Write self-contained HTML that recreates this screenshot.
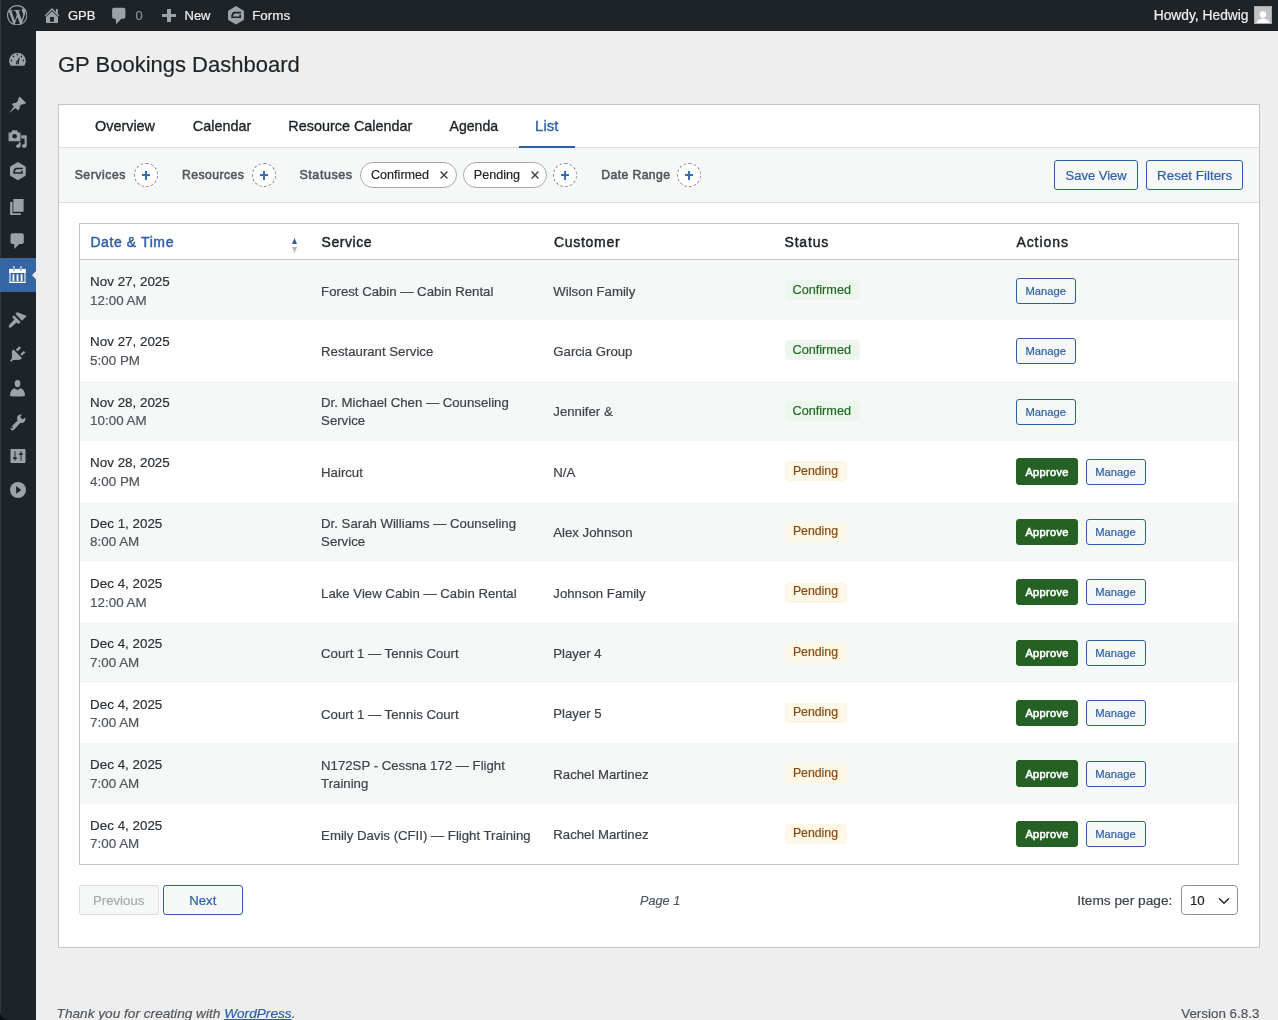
<!DOCTYPE html>
<html><head><meta charset="utf-8"><title>GP Bookings Dashboard</title>
<style>
html,body{margin:0;padding:0;}
body{width:1278px;height:1020px;overflow:hidden;position:relative;background:#eeeeee;font-family:"Liberation Sans", sans-serif;}
.t{position:absolute;white-space:nowrap;}
.b{position:absolute;}
#root{position:absolute;left:0;top:0;width:1278px;height:1020px;will-change:transform;}
.t{-webkit-text-stroke:0.2px currentColor;}
a{color:inherit}
</style></head><body><div id="root">
<div class="b" style="left:0px;top:0px;width:1278px;height:31px;background:#1d2327"></div>
<div class="b" style="left:0px;top:31px;width:36px;height:989px;background:#1d2327"></div>
<div class="b" style="left:0px;top:0px;width:1px;height:1020px;background:#33383d"></div>
<svg class="b" style="left:6.8px;top:4.65px" width="20.4" height="20.4" viewBox="0 0 20 20"><path fill="#9ca2a7" d="M20 10c0-5.51-4.49-10-10-10C4.48 0 0 4.49 0 10c0 5.52 4.48 10 10 10 5.51 0 10-4.48 10-10zM7.78 15.37L4.37 6.22c.55-.02 1.17-.08 1.17-.08.5-.06.44-1.13-.06-1.11 0 0-1.45.11-2.37.11-.18 0-.37 0-.58-.01C4.12 2.69 6.87 1.11 10 1.11c2.33 0 4.45.87 6.05 2.34-.68-.11-1.65.39-1.65 1.58 0 .74.45 1.36.9 2.1.35.61.55 1.36.55 2.46 0 1.49-1.4 5-1.4 5l-3.03-8.37c.54-.02.82-.17.82-.17.5-.05.44-1.25-.06-1.22 0 0-1.44.12-2.38.12-.87 0-2.33-.12-2.33-.12-.5-.03-.56 1.2-.06 1.22l.92.08 1.26 3.41zM17.41 10c.24-.64.74-1.87.43-4.25.7 1.29 1.05 2.71 1.05 4.25 0 3.29-1.73 6.24-4.4 7.78.97-2.59 1.94-5.2 2.92-7.78zM6.1 18.09C3.12 16.65 1.11 13.53 1.11 10c0-1.3.23-2.48.72-3.59C3.25 10.3 4.67 14.2 6.1 18.09zm4.03-6.63l2.58 6.98c-.86.29-1.76.45-2.71.45-.79 0-1.57-.11-2.29-.33.81-2.38 1.62-4.74 2.42-7.1z"/></svg>
<svg class="b" style="left:44px;top:7px" width="16" height="17" viewBox="0 0 16 17"><path d="M0.6 8.4 L8 1.1 L11.9 4.9 V2.1 H13.9 V6.9 L15.4 8.4 L14.4 9.4 L8 3.1 L1.6 9.4 Z" fill="#9ca2a7"/><path d="M2 10 L8 4.3 L14 10 V16 H2 Z M6.1 10.1 V14.8 H9.9 V10.1 Z" fill="#9ca2a7" fill-rule="evenodd"/></svg>
<div class="t" style="left:68.00px;top:6.00px;font-size:13px;line-height:20px;color:#f0f0f1;font-weight:400;font-style:normal;">GPB</div>
<svg class="b" style="left:112px;top:7px" width="14" height="18" viewBox="0 0 14 18"><path d="M2.1 0.85 H11.4 Q13.4 0.85 13.4 2.85 V9.8 Q13.4 11.8 11.4 11.8 H9.3 L4.2 17.2 L3.7 11.8 H2.1 Q0.1 11.8 0.1 9.8 V2.85 Q0.1 0.85 2.1 0.85 Z" fill="#9ca2a7"/></svg>
<div class="t" style="left:135.50px;top:6.00px;font-size:13px;line-height:20px;color:#8c8f94;font-weight:400;font-style:normal;">0</div>
<div class="b" style="left:162px;top:14px;width:14px;height:3px;background:#9ca2a7"></div>
<div class="b" style="left:167.2px;top:8.9px;width:3.5px;height:13.2px;background:#9ca2a7"></div>
<div class="t" style="left:184.50px;top:6.00px;font-size:13px;line-height:20px;color:#f0f0f1;font-weight:400;font-style:normal;">New</div>
<svg class="b" style="left:227.9px;top:6.3px" width="16" height="18.6" viewBox="0 0 16 18.6"><path d="M8 0 L15.3 4.4 Q16 4.8 16 5.6 V13 Q16 13.8 15.3 14.2 L8 18.6 L0.7 14.2 Q0 13.8 0 13 V5.6 Q0 4.8 0.7 4.4 Z" fill="#9ca2a7"/><path d="M13 5.75 H6.2 Q4.7 5.75 4.1 7.3 L3.3 9.4 V12 H13 V8.8 H11.4 V10.5 H4.9 L5.3 9.2 Q5.7 7.4 6.8 7.4 H13 Z" fill="#1d2327"/></svg>
<div class="t" style="left:252.20px;top:6.00px;font-size:13.4px;line-height:20px;color:#f0f0f1;font-weight:400;font-style:normal;">Forms</div>
<div class="t" style="left:1153.70px;top:6.00px;font-size:13.8px;line-height:20px;color:#f0f0f1;font-weight:400;font-style:normal;">Howdy, Hedwig</div>
<svg class="b" style="left:1254px;top:6px" width="18" height="18" viewBox="0 0 18 18"><rect x="0.5" y="0.5" width="17" height="17" fill="#c2c3c5" stroke="#a9abae" stroke-width="1"/><circle cx="9" cy="8.6" r="3.3" fill="#fff"/><path d="M2.6 16.9 Q3.6 12.8 9 12.5 Q14.4 12.8 15.4 16.9 Z" fill="#fff"/></svg>
<svg class="b" style="left:0px;top:1012px" width="8" height="8" viewBox="0 0 8 8"><path d="M0 0 Q0.5 7.5 8 8 L0 8 Z" fill="#0a0b0c"/></svg>
<svg class="b" style="left:8px;top:49.40px" width="20" height="20" viewBox="0 0 20 20"><path d="M2.7 16.7 A8.3 8.3 0 1 1 16.3 16.7 Z" fill="#9ca2a7"/><ellipse cx="3.5" cy="11.5" rx=".75" ry=".95" fill="#1d2327"/><ellipse cx="5.5" cy="7.5" rx=".75" ry=".95" fill="#1d2327"/><ellipse cx="9.4" cy="5.5" rx=".75" ry=".95" fill="#1d2327"/><ellipse cx="13.4" cy="7.5" rx=".75" ry=".95" fill="#1d2327"/><ellipse cx="15.4" cy="11.5" rx=".75" ry=".95" fill="#1d2327"/><path d="M8 13.4 L11.8 7.6 L10.9 13.6 Z" fill="#1d2327"/><circle cx="9.4" cy="13.8" r="1.7" fill="#1d2327"/><ellipse cx="9.4" cy="13.8" rx=".6" ry=".8" fill="#9ca2a7"/></svg>
<svg class="b" style="left:8px;top:94.70px" width="20" height="20" viewBox="0 0 20 20"><path d="M11.5 1.4 L18 7.7 L16.8 8.9 L13.4 9.6 L11.6 11.6 L11.8 13.6 L10 15.5 L7.6 13.1 L1.1 18.1 L6 11.6 L3.9 9.6 L5.6 8 L7.8 8.1 L9.8 6 L10.4 3.4 Z" fill="#9ca2a7"/></svg>
<svg class="b" style="left:8px;top:128.70px" width="20" height="20" viewBox="0 0 20 20"><path d="M0.6 3.4 H3.5 L4.2 1.2 H9.1 L9.8 3.4 H12.5 V12.2 H0.6 Z" fill="#9ca2a7"/><circle cx="6.6" cy="7.2" r="2.3" fill="#1d2327"/><path d="M13.3 6.3 H18.7 V17 Q18.7 18.8 16.4 18.8 Q13.9 18.8 13.9 16.9 Q13.9 15 16.6 15 V9.6 H13.3 Z" fill="#9ca2a7"/><path d="M10.8 13.3 H12.6 V17 Q12.6 18.8 10.4 18.8 Q8 18.8 8 16.9 Q8 15.2 10.8 14.9 Z" fill="#9ca2a7"/></svg>
<svg class="b" style="left:10px;top:162.4px" width="15.8" height="18.3" viewBox="0 0 16 18.6"><path d="M8 0 L15.3 4.4 Q16 4.8 16 5.6 V13 Q16 13.8 15.3 14.2 L8 18.6 L0.7 14.2 Q0 13.8 0 13 V5.6 Q0 4.8 0.7 4.4 Z" fill="#9ca2a7"/><path d="M13 5.75 H6.2 Q4.7 5.75 4.1 7.3 L3.3 9.4 V12 H13 V8.8 H11.4 V10.5 H4.9 L5.3 9.2 Q5.7 7.4 6.8 7.4 H13 Z" fill="#1d2327"/></svg>
<svg class="b" style="left:8px;top:197.00px" width="20" height="20" viewBox="0 0 20 20"><rect x="5.3" y="2" width="10.3" height="12.8" fill="#9ca2a7"/><path d="M2.1 4.9 H4.5 V16.2 H12.8 V18 H2.1 Z" fill="#9ca2a7"/></svg>
<svg class="b" style="left:8px;top:230.80px" width="20" height="20" viewBox="0 0 20 20"><path d="M4.5 2.2 H13.8 Q15.8 2.2 15.8 4.2 V11 Q15.8 13 13.8 13 H11.2 L6.35 18.1 L6.2 13 H4.5 Q2.5 13 2.5 11 V4.2 Q2.5 2.2 4.5 2.2 Z" fill="#9ca2a7"/></svg>
<div class="b" style="left:0px;top:258px;width:36px;height:34px;background:#3465a5"></div>
<svg class="b" style="left:8px;top:265px" width="20" height="20" viewBox="0 0 20 20"><rect x="1.1" y="3.9" width="16.7" height="4.1" fill="#fff"/><rect x="1.1" y="16.6" width="16.7" height="1.4" fill="#fff"/><rect x="1.1" y="8" width="1.8" height="8.6" fill="#fff" opacity=".6"/><rect x="16.1" y="8" width="1.7" height="8.6" fill="#fff" opacity=".6"/><rect x="4.5" y="9.2" width="1.8" height="6.7" rx=".5" fill="#fff"/><rect x="8.6" y="9.2" width="1.8" height="6.7" rx=".5" fill="#fff"/><rect x="12.7" y="9.2" width="1.8" height="6.7" rx=".5" fill="#fff"/><circle cx="5.9" cy="2.3" r="1.1" fill="#fff" opacity=".85"/><circle cx="13" cy="2.3" r="1.1" fill="#fff" opacity=".85"/><rect x="5.1" y="2.4" width="1.6" height="3.3" fill="#3465a5"/><rect x="12.2" y="2.4" width="1.6" height="3.3" fill="#3465a5"/><rect x="5.1" y="2.4" width="1.6" height="3.3" fill="#fff" opacity=".55"/><rect x="12.2" y="2.4" width="1.6" height="3.3" fill="#fff" opacity=".55"/></svg>
<svg class="b" style="left:32px;top:270.8px" width="4" height="8.4" viewBox="0 0 4 8.4"><path d="M4 0 L0 4.2 L4 8.4 Z" fill="#eeeeee"/></svg>
<svg class="b" style="left:8px;top:309.80px" width="20" height="20" viewBox="0 0 20 20"><path d="M7.4 3.85 Q8.4 2.2 9.6 2.2 L18.7 6 L14 10.7 Z" fill="#9ca2a7"/><path d="M5.8 5.3 L12.6 12.1 L10.7 14 L8.6 12.4 L3.2 17.3 Q2 18.3 1 17.2 Q0 16 1.2 14.9 L6.3 9.6 L4.1 7.1 Z" fill="#9ca2a7"/></svg>
<svg class="b" style="left:8px;top:343.80px" width="20" height="20" viewBox="0 0 20 20"><path d="M5.3 5.26 L14 14.2 L12.1 15.85 L5.1 16.1 L3.4 17.7 L2 16.55 L4.1 14.2 L3.9 7.14 Z" fill="#9ca2a7"/><path d="M7.9 5.5 L11.4 2.2 L13.06 3.85 L9.5 7.4 Z" fill="#9ca2a7"/><path d="M12.35 9.96 L15.9 6.9 L17.3 8.55 L13.8 11.85 Z" fill="#9ca2a7"/></svg>
<svg class="b" style="left:8px;top:377.80px" width="20" height="20" viewBox="0 0 20 20"><ellipse cx="9.5" cy="5.6" rx="2.85" ry="3.65" fill="#9ca2a7"/><path d="M2 18 Q2 11.6 6.4 10.2 L9.4 11.9 L12.6 10.2 Q17 11.6 17 18 Q9.5 19 2 18 Z" fill="#9ca2a7"/></svg>
<svg class="b" style="left:8px;top:412.00px" width="20" height="20" viewBox="0 0 20 20"><path d="M14 2.5 L12.1 5.1 L14.5 7.6 L17.3 5.5 Q18 8.6 16.3 9.9 Q14.7 11.2 12.4 10.8 L6 17.8 Q4.6 19 3.1 17.8 Q1.8 16.4 3 15 L9.6 8.6 Q8.2 6.2 9.8 3.8 Q11.6 2.2 14 2.5 Z" fill="#9ca2a7"/><circle cx="4" cy="15.4" r=".95" fill="#1d2327"/></svg>
<svg class="b" style="left:8px;top:445.90px" width="20" height="20" viewBox="0 0 20 20"><rect x="2.47" y="3.04" width="15" height="13.86" rx=".7" fill="#9ca2a7"/><rect x="6.1" y="5.16" width="1.8" height="9.64" fill="#5c6166"/><rect x="12.1" y="5.16" width="1.8" height="9.64" fill="#5c6166"/><rect x="4.8" y="11.16" width="4.26" height="1.74" rx=".8" fill="#1d2327"/><rect x="10.8" y="7.16" width="4.1" height="1.74" rx=".8" fill="#1d2327"/></svg>
<svg class="b" style="left:8px;top:480.00px" width="20" height="20" viewBox="0 0 20 20"><circle cx="10" cy="10" r="8" fill="#9ca2a7"/><path d="M8.1 6 L13.3 9.9 L8.1 13.76 Z" fill="#1d2327"/></svg>
<div class="t" style="left:58.00px;top:50.00px;font-size:22px;line-height:30px;color:#1d2327;font-weight:400;font-style:normal;">GP Bookings Dashboard</div>
<div class="b" style="left:58px;top:104px;width:1202px;height:844px;background:#fff;border:1px solid #c3c4c7;box-sizing:border-box"></div>
<div class="b" style="left:59px;top:147px;width:1200px;height:1px;background:#dcdcde"></div>
<div class="b" style="left:59px;top:148px;width:1200px;height:54px;background:#f6f7f7"></div>
<div class="b" style="left:59px;top:202px;width:1200px;height:1px;background:#dcdcde"></div>
<div class="t" style="left:95.00px;top:116.00px;font-size:14.4px;line-height:20px;color:#1d2327;font-weight:400;font-style:normal;-webkit-text-stroke:0.35px currentColor">Overview</div>
<div class="t" style="left:192.80px;top:116.00px;font-size:14.4px;line-height:20px;color:#1d2327;font-weight:400;font-style:normal;-webkit-text-stroke:0.35px currentColor">Calendar</div>
<div class="t" style="left:288.30px;top:116.00px;font-size:14.4px;line-height:20px;color:#1d2327;font-weight:400;font-style:normal;-webkit-text-stroke:0.35px currentColor">Resource Calendar</div>
<div class="t" style="left:449.50px;top:116.00px;font-size:14.1px;line-height:20px;color:#1d2327;font-weight:400;font-style:normal;-webkit-text-stroke:0.35px currentColor">Agenda</div>
<div class="t" style="left:535.10px;top:116.00px;font-size:14.9px;line-height:20px;color:#2c5fa6;font-weight:400;font-style:normal;-webkit-text-stroke:0.35px currentColor">List</div>
<div class="b" style="left:519px;top:146px;width:56px;height:2px;background:#2c5fa6"></div>
<div class="t" style="-webkit-text-stroke:0.55px currentColor;letter-spacing:0.557px;left:74.70px;top:165.00px;font-size:12.2px;line-height:20px;color:#50575e;font-weight:400;font-style:normal;">Services</div>
<div class="b" style="left:134px;top:163px;width:24px;height:24px;border:1px dashed #8c8f94;border-radius:50%;box-sizing:border-box;background:#fff"></div>
<div class="b" style="left:141.89999999999998px;top:174.45px;width:8.6px;height:1.5px;background:#3a6cb3"></div>
<div class="b" style="left:145.45px;top:170.75px;width:1.5px;height:8.9px;background:#3a6cb3"></div>
<div class="t" style="-webkit-text-stroke:0.55px currentColor;letter-spacing:0.45px;left:182.00px;top:165.00px;font-size:12.2px;line-height:20px;color:#50575e;font-weight:400;font-style:normal;">Resources</div>
<div class="b" style="left:252px;top:163px;width:24px;height:24px;border:1px dashed #8c8f94;border-radius:50%;box-sizing:border-box;background:#fff"></div>
<div class="b" style="left:259.9px;top:174.45px;width:8.6px;height:1.5px;background:#3a6cb3"></div>
<div class="b" style="left:263.45px;top:170.75px;width:1.5px;height:8.9px;background:#3a6cb3"></div>
<div class="t" style="-webkit-text-stroke:0.55px currentColor;letter-spacing:0.58px;left:299.40px;top:165.00px;font-size:12.5px;line-height:20px;color:#50575e;font-weight:400;font-style:normal;">Statuses</div>
<div class="b" style="left:360px;top:162px;width:97px;height:26px;border:1px solid #a7aaad;border-radius:13px;box-sizing:border-box;background:#fff"></div>
<div class="t" style="left:371.00px;top:165.00px;font-size:12.6px;line-height:20px;color:#1d2327;font-weight:400;font-style:normal;">Confirmed</div>
<svg class="b" style="left:440.4px;top:171px" width="8" height="8" viewBox="0 0 8 8"><path d="M.6 .6 L7.4 7.4 M7.4 .6 L.6 7.4" stroke="#3c434a" stroke-width="1.4"/></svg>
<div class="b" style="left:463px;top:162px;width:84px;height:26px;border:1px solid #a7aaad;border-radius:13px;box-sizing:border-box;background:#fff"></div>
<div class="t" style="left:473.80px;top:165.00px;font-size:12.6px;line-height:20px;color:#1d2327;font-weight:400;font-style:normal;">Pending</div>
<svg class="b" style="left:530.6px;top:171px" width="8" height="8" viewBox="0 0 8 8"><path d="M.6 .6 L7.4 7.4 M7.4 .6 L.6 7.4" stroke="#3c434a" stroke-width="1.4"/></svg>
<div class="b" style="left:553px;top:163px;width:24px;height:24px;border:1px dashed #8c8f94;border-radius:50%;box-sizing:border-box;background:#fff"></div>
<div class="b" style="left:560.9000000000001px;top:174.45px;width:8.6px;height:1.5px;background:#3a6cb3"></div>
<div class="b" style="left:564.45px;top:170.75px;width:1.5px;height:8.9px;background:#3a6cb3"></div>
<div class="t" style="-webkit-text-stroke:0.55px currentColor;letter-spacing:0.4px;left:601.30px;top:165.00px;font-size:12.2px;line-height:20px;color:#50575e;font-weight:400;font-style:normal;">Date Range</div>
<div class="b" style="left:677px;top:163px;width:24px;height:24px;border:1px dashed #8c8f94;border-radius:50%;box-sizing:border-box;background:#fff"></div>
<div class="b" style="left:684.9000000000001px;top:174.45px;width:8.6px;height:1.5px;background:#3a6cb3"></div>
<div class="b" style="left:688.45px;top:170.75px;width:1.5px;height:8.9px;background:#3a6cb3"></div>
<div class="b" style="left:1054px;top:160px;width:84px;height:30px;border:1px solid #2c5fa6;border-radius:3px;box-sizing:border-box;background:transparent"></div>
<div class="t" style="left:1065.50px;top:166.00px;font-size:13px;line-height:20px;color:#2c5fa6;font-weight:400;font-style:normal;">Save View</div>
<div class="b" style="left:1146px;top:160px;width:97px;height:30px;border:1px solid #2c5fa6;border-radius:3px;box-sizing:border-box;background:transparent"></div>
<div class="t" style="left:1157.10px;top:166.00px;font-size:13.4px;line-height:20px;color:#2c5fa6;font-weight:400;font-style:normal;">Reset Filters</div>
<div class="b" style="left:79px;top:223px;width:1160px;height:642px;border:1px solid #c3c4c7;box-sizing:border-box;background:#fff"></div>
<div class="b" style="left:80px;top:259px;width:1158px;height:1px;background:#c3c4c7"></div>
<div class="t" style="-webkit-text-stroke:0.45px currentColor;letter-spacing:0.6px;left:90.40px;top:232.00px;font-size:14px;line-height:20px;color:#2c5fa6;font-weight:400;font-style:normal;">Date &amp; Time</div>
<svg class="b" style="left:292px;top:238px" width="5" height="15" viewBox="0 0 5 15"><path d="M2.5 0 L5 6 H0 Z" fill="#2c5fa6"/><path d="M0 9 H5 L2.5 15 Z" fill="#b2b5ba"/></svg>
<div class="t" style="-webkit-text-stroke:0.45px currentColor;letter-spacing:0.567px;left:321.50px;top:232.00px;font-size:14px;line-height:20px;color:#1d2327;font-weight:400;font-style:normal;">Service</div>
<div class="t" style="-webkit-text-stroke:0.45px currentColor;letter-spacing:0.729px;left:553.90px;top:232.00px;font-size:14px;line-height:20px;color:#1d2327;font-weight:400;font-style:normal;">Customer</div>
<div class="t" style="-webkit-text-stroke:0.45px currentColor;letter-spacing:0.82px;left:784.50px;top:232.00px;font-size:14px;line-height:20px;color:#1d2327;font-weight:400;font-style:normal;">Status</div>
<div class="t" style="-webkit-text-stroke:0.45px currentColor;letter-spacing:0.933px;left:1016.40px;top:232.00px;font-size:14px;line-height:20px;color:#1d2327;font-weight:400;font-style:normal;">Actions</div>
<div class="b" style="left:80px;top:260.0px;width:1158px;height:60.4px;background:#f6f7f7"></div>
<div class="t" style="left:90.10px;top:272.00px;font-size:13.4px;line-height:20px;color:#2c3338;font-weight:400;font-style:normal;">Nov 27, 2025</div>
<div class="t" style="left:90.10px;top:290.60px;font-size:13.4px;line-height:20px;color:#50575e;font-weight:400;font-style:normal;">12:00 AM</div>
<div class="t" style="left:321.10px;top:282.00px;font-size:13.2px;line-height:20px;color:#3c434a;font-weight:400;font-style:normal;">Forest Cabin — Cabin Rental</div>
<div class="t" style="left:553.30px;top:281.60px;font-size:13.2px;line-height:20px;color:#3c434a;font-weight:400;font-style:normal;">Wilson Family</div>
<div class="b" style="left:785px;top:280.0px;width:75px;height:20px;background:#edf6ec;border-radius:4px"></div>
<div class="t" style="left:792.50px;top:279.80px;font-size:12.7px;line-height:20px;color:#1f6b24;font-weight:400;font-style:normal;">Confirmed</div>
<div class="b" style="left:1016px;top:278.0px;width:60px;height:26px;border:1px solid #2c5fa6;border-radius:3px;box-sizing:border-box;background:#f6f7f7"></div>
<div class="t" style="left:1025.50px;top:280.80px;font-size:11.2px;line-height:20px;color:#2c5fa6;font-weight:400;font-style:normal;">Manage</div>
<div class="t" style="left:90.10px;top:332.40px;font-size:13.4px;line-height:20px;color:#2c3338;font-weight:400;font-style:normal;">Nov 27, 2025</div>
<div class="t" style="left:90.10px;top:351.00px;font-size:13.4px;line-height:20px;color:#50575e;font-weight:400;font-style:normal;">5:00 PM</div>
<div class="t" style="left:321.10px;top:342.40px;font-size:13.2px;line-height:20px;color:#3c434a;font-weight:400;font-style:normal;">Restaurant Service</div>
<div class="t" style="left:553.30px;top:342.00px;font-size:13.2px;line-height:20px;color:#3c434a;font-weight:400;font-style:normal;">Garcia Group</div>
<div class="b" style="left:785px;top:340.4px;width:75px;height:20px;background:#edf6ec;border-radius:4px"></div>
<div class="t" style="left:792.50px;top:340.20px;font-size:12.7px;line-height:20px;color:#1f6b24;font-weight:400;font-style:normal;">Confirmed</div>
<div class="b" style="left:1016px;top:338.4px;width:60px;height:26px;border:1px solid #2c5fa6;border-radius:3px;box-sizing:border-box;background:#f6f7f7"></div>
<div class="t" style="left:1025.50px;top:341.20px;font-size:11.2px;line-height:20px;color:#2c5fa6;font-weight:400;font-style:normal;">Manage</div>
<div class="b" style="left:80px;top:380.8px;width:1158px;height:60.4px;background:#f6f7f7"></div>
<div class="t" style="left:90.10px;top:392.80px;font-size:13.4px;line-height:20px;color:#2c3338;font-weight:400;font-style:normal;">Nov 28, 2025</div>
<div class="t" style="left:90.10px;top:411.40px;font-size:13.4px;line-height:20px;color:#50575e;font-weight:400;font-style:normal;">10:00 AM</div>
<div class="t" style="left:321.10px;top:393.10px;font-size:13.2px;line-height:20px;color:#3c434a;font-weight:400;font-style:normal;">Dr. Michael Chen — Counseling</div>
<div class="t" style="left:321.10px;top:411.10px;font-size:13.2px;line-height:20px;color:#3c434a;font-weight:400;font-style:normal;">Service</div>
<div class="t" style="left:553.30px;top:402.40px;font-size:13.2px;line-height:20px;color:#3c434a;font-weight:400;font-style:normal;">Jennifer &amp;</div>
<div class="b" style="left:785px;top:400.8px;width:75px;height:20px;background:#edf6ec;border-radius:4px"></div>
<div class="t" style="left:792.50px;top:400.60px;font-size:12.7px;line-height:20px;color:#1f6b24;font-weight:400;font-style:normal;">Confirmed</div>
<div class="b" style="left:1016px;top:398.8px;width:60px;height:26px;border:1px solid #2c5fa6;border-radius:3px;box-sizing:border-box;background:#f6f7f7"></div>
<div class="t" style="left:1025.50px;top:401.60px;font-size:11.2px;line-height:20px;color:#2c5fa6;font-weight:400;font-style:normal;">Manage</div>
<div class="t" style="left:90.10px;top:453.20px;font-size:13.4px;line-height:20px;color:#2c3338;font-weight:400;font-style:normal;">Nov 28, 2025</div>
<div class="t" style="left:90.10px;top:471.80px;font-size:13.4px;line-height:20px;color:#50575e;font-weight:400;font-style:normal;">4:00 PM</div>
<div class="t" style="left:321.10px;top:463.20px;font-size:13.2px;line-height:20px;color:#3c434a;font-weight:400;font-style:normal;">Haircut</div>
<div class="t" style="left:553.30px;top:462.80px;font-size:13.2px;line-height:20px;color:#3c434a;font-weight:400;font-style:normal;">N/A</div>
<div class="b" style="left:785px;top:461.2px;width:62px;height:20.6px;background:#fcf7e6;border-radius:4px"></div>
<div class="t" style="left:792.90px;top:460.60px;font-size:12.3px;line-height:20px;color:#8a4b12;font-weight:400;font-style:normal;">Pending</div>
<div class="b" style="left:1016px;top:458.4px;width:62px;height:26.3px;border:1px solid #256125;border-radius:3px;box-sizing:border-box;background:#256125"></div>
<div class="t" style="-webkit-text-stroke:0.55px currentColor;letter-spacing:0.33px;left:1025.40px;top:461.60px;font-size:11px;line-height:20px;color:#fff;font-weight:400;font-style:normal;">Approve</div>
<div class="b" style="left:1086px;top:458.6px;width:60px;height:26px;border:1px solid #2c5fa6;border-radius:3px;box-sizing:border-box;background:#f6f7f7"></div>
<div class="t" style="left:1095.20px;top:461.60px;font-size:11.2px;line-height:20px;color:#2c5fa6;font-weight:400;font-style:normal;">Manage</div>
<div class="b" style="left:80px;top:501.6px;width:1158px;height:60.4px;background:#f6f7f7"></div>
<div class="t" style="left:90.10px;top:513.60px;font-size:13.4px;line-height:20px;color:#2c3338;font-weight:400;font-style:normal;">Dec 1, 2025</div>
<div class="t" style="left:90.10px;top:532.20px;font-size:13.4px;line-height:20px;color:#50575e;font-weight:400;font-style:normal;">8:00 AM</div>
<div class="t" style="left:321.10px;top:513.90px;font-size:13.2px;line-height:20px;color:#3c434a;font-weight:400;font-style:normal;">Dr. Sarah Williams — Counseling</div>
<div class="t" style="left:321.10px;top:531.90px;font-size:13.2px;line-height:20px;color:#3c434a;font-weight:400;font-style:normal;">Service</div>
<div class="t" style="left:553.30px;top:523.20px;font-size:13.2px;line-height:20px;color:#3c434a;font-weight:400;font-style:normal;">Alex Johnson</div>
<div class="b" style="left:785px;top:521.6px;width:62px;height:20.6px;background:#fcf7e6;border-radius:4px"></div>
<div class="t" style="left:792.90px;top:521.00px;font-size:12.3px;line-height:20px;color:#8a4b12;font-weight:400;font-style:normal;">Pending</div>
<div class="b" style="left:1016px;top:518.8px;width:62px;height:26.3px;border:1px solid #256125;border-radius:3px;box-sizing:border-box;background:#256125"></div>
<div class="t" style="-webkit-text-stroke:0.55px currentColor;letter-spacing:0.33px;left:1025.40px;top:522.00px;font-size:11px;line-height:20px;color:#fff;font-weight:400;font-style:normal;">Approve</div>
<div class="b" style="left:1086px;top:519.0px;width:60px;height:26px;border:1px solid #2c5fa6;border-radius:3px;box-sizing:border-box;background:#f6f7f7"></div>
<div class="t" style="left:1095.20px;top:522.00px;font-size:11.2px;line-height:20px;color:#2c5fa6;font-weight:400;font-style:normal;">Manage</div>
<div class="t" style="left:90.10px;top:574.00px;font-size:13.4px;line-height:20px;color:#2c3338;font-weight:400;font-style:normal;">Dec 4, 2025</div>
<div class="t" style="left:90.10px;top:592.60px;font-size:13.4px;line-height:20px;color:#50575e;font-weight:400;font-style:normal;">12:00 AM</div>
<div class="t" style="left:321.10px;top:584.00px;font-size:13.2px;line-height:20px;color:#3c434a;font-weight:400;font-style:normal;">Lake View Cabin — Cabin Rental</div>
<div class="t" style="left:553.30px;top:583.60px;font-size:13.2px;line-height:20px;color:#3c434a;font-weight:400;font-style:normal;">Johnson Family</div>
<div class="b" style="left:785px;top:582.0px;width:62px;height:20.6px;background:#fcf7e6;border-radius:4px"></div>
<div class="t" style="left:792.90px;top:581.40px;font-size:12.3px;line-height:20px;color:#8a4b12;font-weight:400;font-style:normal;">Pending</div>
<div class="b" style="left:1016px;top:579.2px;width:62px;height:26.3px;border:1px solid #256125;border-radius:3px;box-sizing:border-box;background:#256125"></div>
<div class="t" style="-webkit-text-stroke:0.55px currentColor;letter-spacing:0.33px;left:1025.40px;top:582.40px;font-size:11px;line-height:20px;color:#fff;font-weight:400;font-style:normal;">Approve</div>
<div class="b" style="left:1086px;top:579.4px;width:60px;height:26px;border:1px solid #2c5fa6;border-radius:3px;box-sizing:border-box;background:#f6f7f7"></div>
<div class="t" style="left:1095.20px;top:582.40px;font-size:11.2px;line-height:20px;color:#2c5fa6;font-weight:400;font-style:normal;">Manage</div>
<div class="b" style="left:80px;top:622.4px;width:1158px;height:60.4px;background:#f6f7f7"></div>
<div class="t" style="left:90.10px;top:634.40px;font-size:13.4px;line-height:20px;color:#2c3338;font-weight:400;font-style:normal;">Dec 4, 2025</div>
<div class="t" style="left:90.10px;top:653.00px;font-size:13.4px;line-height:20px;color:#50575e;font-weight:400;font-style:normal;">7:00 AM</div>
<div class="t" style="left:321.10px;top:644.40px;font-size:13.2px;line-height:20px;color:#3c434a;font-weight:400;font-style:normal;">Court 1 — Tennis Court</div>
<div class="t" style="left:553.30px;top:644.00px;font-size:13.2px;line-height:20px;color:#3c434a;font-weight:400;font-style:normal;">Player 4</div>
<div class="b" style="left:785px;top:642.4px;width:62px;height:20.6px;background:#fcf7e6;border-radius:4px"></div>
<div class="t" style="left:792.90px;top:641.80px;font-size:12.3px;line-height:20px;color:#8a4b12;font-weight:400;font-style:normal;">Pending</div>
<div class="b" style="left:1016px;top:639.6px;width:62px;height:26.3px;border:1px solid #256125;border-radius:3px;box-sizing:border-box;background:#256125"></div>
<div class="t" style="-webkit-text-stroke:0.55px currentColor;letter-spacing:0.33px;left:1025.40px;top:642.80px;font-size:11px;line-height:20px;color:#fff;font-weight:400;font-style:normal;">Approve</div>
<div class="b" style="left:1086px;top:639.8px;width:60px;height:26px;border:1px solid #2c5fa6;border-radius:3px;box-sizing:border-box;background:#f6f7f7"></div>
<div class="t" style="left:1095.20px;top:642.80px;font-size:11.2px;line-height:20px;color:#2c5fa6;font-weight:400;font-style:normal;">Manage</div>
<div class="t" style="left:90.10px;top:694.80px;font-size:13.4px;line-height:20px;color:#2c3338;font-weight:400;font-style:normal;">Dec 4, 2025</div>
<div class="t" style="left:90.10px;top:713.40px;font-size:13.4px;line-height:20px;color:#50575e;font-weight:400;font-style:normal;">7:00 AM</div>
<div class="t" style="left:321.10px;top:704.80px;font-size:13.2px;line-height:20px;color:#3c434a;font-weight:400;font-style:normal;">Court 1 — Tennis Court</div>
<div class="t" style="left:553.30px;top:704.40px;font-size:13.2px;line-height:20px;color:#3c434a;font-weight:400;font-style:normal;">Player 5</div>
<div class="b" style="left:785px;top:702.8px;width:62px;height:20.6px;background:#fcf7e6;border-radius:4px"></div>
<div class="t" style="left:792.90px;top:702.20px;font-size:12.3px;line-height:20px;color:#8a4b12;font-weight:400;font-style:normal;">Pending</div>
<div class="b" style="left:1016px;top:700.0px;width:62px;height:26.3px;border:1px solid #256125;border-radius:3px;box-sizing:border-box;background:#256125"></div>
<div class="t" style="-webkit-text-stroke:0.55px currentColor;letter-spacing:0.33px;left:1025.40px;top:703.20px;font-size:11px;line-height:20px;color:#fff;font-weight:400;font-style:normal;">Approve</div>
<div class="b" style="left:1086px;top:700.2px;width:60px;height:26px;border:1px solid #2c5fa6;border-radius:3px;box-sizing:border-box;background:#f6f7f7"></div>
<div class="t" style="left:1095.20px;top:703.20px;font-size:11.2px;line-height:20px;color:#2c5fa6;font-weight:400;font-style:normal;">Manage</div>
<div class="b" style="left:80px;top:743.2px;width:1158px;height:60.4px;background:#f6f7f7"></div>
<div class="t" style="left:90.10px;top:755.20px;font-size:13.4px;line-height:20px;color:#2c3338;font-weight:400;font-style:normal;">Dec 4, 2025</div>
<div class="t" style="left:90.10px;top:773.80px;font-size:13.4px;line-height:20px;color:#50575e;font-weight:400;font-style:normal;">7:00 AM</div>
<div class="t" style="left:321.10px;top:755.50px;font-size:13.2px;line-height:20px;color:#3c434a;font-weight:400;font-style:normal;">N172SP - Cessna 172 — Flight</div>
<div class="t" style="left:321.10px;top:773.50px;font-size:13.2px;line-height:20px;color:#3c434a;font-weight:400;font-style:normal;">Training</div>
<div class="t" style="left:553.30px;top:764.80px;font-size:13.2px;line-height:20px;color:#3c434a;font-weight:400;font-style:normal;">Rachel Martinez</div>
<div class="b" style="left:785px;top:763.2px;width:62px;height:20.6px;background:#fcf7e6;border-radius:4px"></div>
<div class="t" style="left:792.90px;top:762.60px;font-size:12.3px;line-height:20px;color:#8a4b12;font-weight:400;font-style:normal;">Pending</div>
<div class="b" style="left:1016px;top:760.4px;width:62px;height:26.3px;border:1px solid #256125;border-radius:3px;box-sizing:border-box;background:#256125"></div>
<div class="t" style="-webkit-text-stroke:0.55px currentColor;letter-spacing:0.33px;left:1025.40px;top:763.60px;font-size:11px;line-height:20px;color:#fff;font-weight:400;font-style:normal;">Approve</div>
<div class="b" style="left:1086px;top:760.6px;width:60px;height:26px;border:1px solid #2c5fa6;border-radius:3px;box-sizing:border-box;background:#f6f7f7"></div>
<div class="t" style="left:1095.20px;top:763.60px;font-size:11.2px;line-height:20px;color:#2c5fa6;font-weight:400;font-style:normal;">Manage</div>
<div class="t" style="left:90.10px;top:815.60px;font-size:13.4px;line-height:20px;color:#2c3338;font-weight:400;font-style:normal;">Dec 4, 2025</div>
<div class="t" style="left:90.10px;top:834.20px;font-size:13.4px;line-height:20px;color:#50575e;font-weight:400;font-style:normal;">7:00 AM</div>
<div class="t" style="left:321.10px;top:825.60px;font-size:13.2px;line-height:20px;color:#3c434a;font-weight:400;font-style:normal;">Emily Davis (CFII) — Flight Training</div>
<div class="t" style="left:553.30px;top:825.20px;font-size:13.2px;line-height:20px;color:#3c434a;font-weight:400;font-style:normal;">Rachel Martinez</div>
<div class="b" style="left:785px;top:823.6px;width:62px;height:20.6px;background:#fcf7e6;border-radius:4px"></div>
<div class="t" style="left:792.90px;top:823.00px;font-size:12.3px;line-height:20px;color:#8a4b12;font-weight:400;font-style:normal;">Pending</div>
<div class="b" style="left:1016px;top:820.8px;width:62px;height:26.3px;border:1px solid #256125;border-radius:3px;box-sizing:border-box;background:#256125"></div>
<div class="t" style="-webkit-text-stroke:0.55px currentColor;letter-spacing:0.33px;left:1025.40px;top:824.00px;font-size:11px;line-height:20px;color:#fff;font-weight:400;font-style:normal;">Approve</div>
<div class="b" style="left:1086px;top:821.0px;width:60px;height:26px;border:1px solid #2c5fa6;border-radius:3px;box-sizing:border-box;background:#f6f7f7"></div>
<div class="t" style="left:1095.20px;top:824.00px;font-size:11.2px;line-height:20px;color:#2c5fa6;font-weight:400;font-style:normal;">Manage</div>
<div class="b" style="left:79px;top:885px;width:80px;height:30px;border:1px solid #dcdcde;border-radius:3px;box-sizing:border-box;background:#f6f7f7"></div>
<div class="t" style="left:93.00px;top:891.20px;font-size:13.2px;line-height:20px;color:#a7aaad;font-weight:400;font-style:normal;">Previous</div>
<div class="b" style="left:163px;top:885px;width:80px;height:30px;border:1px solid #2c5fa6;border-radius:3px;box-sizing:border-box;background:#f6f7f7"></div>
<div class="t" style="left:189.20px;top:891.20px;font-size:13.2px;line-height:20px;color:#2c5fa6;font-weight:400;font-style:normal;">Next</div>
<div class="t" style="left:640.00px;top:891.00px;font-size:12.7px;line-height:20px;color:#50575e;font-weight:400;font-style:italic;">Page 1</div>
<div class="t" style="left:1077.20px;top:891.00px;font-size:13.7px;line-height:20px;color:#3c434a;font-weight:400;font-style:normal;">Items per page:</div>
<div class="b" style="left:1181px;top:885px;width:57px;height:30px;border:1px solid #8c8f94;border-radius:4px;box-sizing:border-box;background:#fff"></div>
<div class="t" style="left:1189.90px;top:891.00px;font-size:13.3px;line-height:20px;color:#1d2327;font-weight:400;font-style:normal;">10</div>
<svg class="b" style="left:1218px;top:897px" width="12" height="8" viewBox="0 0 12 8"><path d="M1 1.2 L6 6.2 L11 1.2" fill="none" stroke="#1d2327" stroke-width="1.4"/></svg>
<div class="t" style="left:56.60px;top:1003.70px;font-size:13.65px;line-height:20px;color:#50575e;font-weight:400;font-style:italic;">Thank you for creating with <a href="#" style="color:#2c5fa6;text-decoration:underline">WordPress</a>.</div>
<div class="t" style="left:1181.20px;top:1003.60px;font-size:13.4px;line-height:20px;color:#50575e;font-weight:400;font-style:normal;">Version 6.8.3</div>
</div></body></html>
